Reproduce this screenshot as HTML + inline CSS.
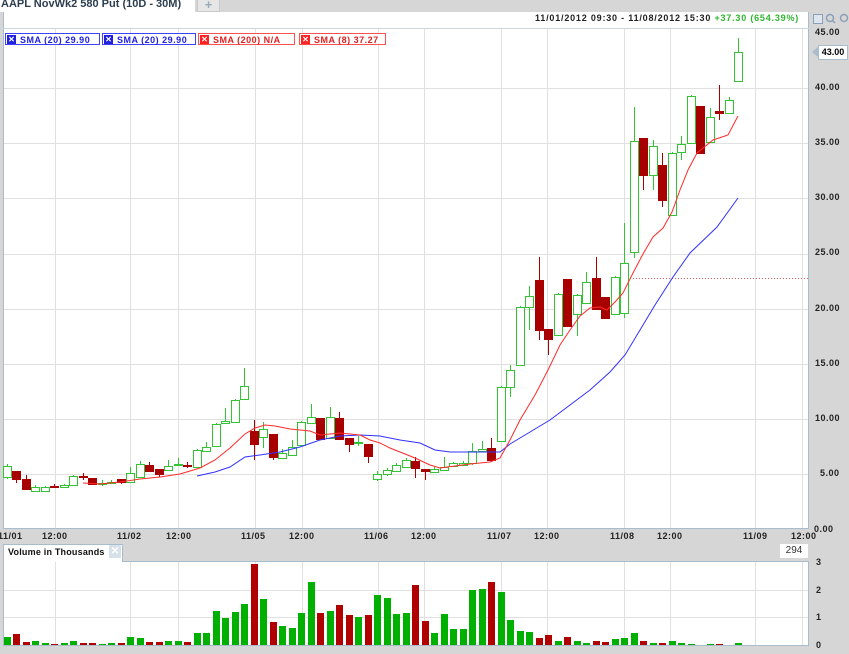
<!DOCTYPE html>
<html><head><meta charset="utf-8">
<style>
html,body{margin:0;padding:0;}
body{width:849px;height:654px;background:#d6d6d6;position:relative;overflow:hidden;font-family:"Liberation Sans",Arial,sans-serif;}
.t{position:absolute;white-space:nowrap;}
.ax{position:absolute;font:bold 9px "Liberation Sans",sans-serif;color:#222;letter-spacing:0.5px;}
.leg{position:absolute;top:33px;height:12px;border:1px solid;background:#fff;font:bold 9px "Liberation Sans",sans-serif;line-height:12px;padding-left:14px;padding-right:3px;box-sizing:border-box;letter-spacing:0.5px;white-space:nowrap;}
.leg i{position:absolute;left:1px;top:1px;width:9px;height:9px;color:#fff;font-style:normal;font-size:8px;line-height:9px;text-align:center;letter-spacing:0;}
</style></head><body>
<div style="position:absolute;left:0;top:0;width:195px;height:12px;background:#fff;"></div>
<div class="t" style="left:1px;top:-2px;font:bold 11px 'Liberation Sans',sans-serif;color:#2c3e50;">AAPL NovWk2 580 Put (10D - 30M)</div>
<div style="position:absolute;left:197px;top:0;width:21px;height:11px;background:#e6e6e6;border:1px solid #c8c8c8;border-top:none;color:#9ab;font:bold 13px sans-serif;line-height:10px;text-align:center;">+</div>
<div style="position:absolute;left:3px;top:12px;width:806px;height:517px;background:#fff;border-left:1px solid #a9bccc;border-right:1px solid #a9bccc;border-bottom:1px solid #a9bccc;box-sizing:border-box;"></div>
<div style="position:absolute;left:3px;top:28px;width:806px;height:1px;background:#c9d6e0;"></div>
<div class="t" style="left:535px;top:13px;font:bold 9px 'Liberation Sans',sans-serif;color:#222;letter-spacing:0.8px;">11/01/2012 09:30 - 11/08/2012 15:30 <span style="color:#2db52d">+37.30 (654.39%)</span></div>
<svg style="position:absolute;left:812px;top:12px" width="37" height="14"><rect x="1.5" y="2.5" width="9" height="9" fill="#dde6ee" stroke="#8aa0b8"/><circle cx="18" cy="6" r="3.5" fill="none" stroke="#8aa0b8" stroke-width="1.5"/><line x1="20.5" y1="8.5" x2="23" y2="11" stroke="#8aa0b8" stroke-width="1.5"/><circle cx="32" cy="6" r="3.5" fill="none" stroke="#8aa0b8" stroke-width="1.5"/></svg>

<svg id="ch" style="position:absolute;left:0;top:0" width="849" height="654"></svg>

<div class="leg" style="left:5px;width:95px;border-color:#4040ff;color:#2020e0;"><i style="background:#2020e0">✕</i>SMA (20) 29.90</div>
<div class="leg" style="left:102px;width:94px;border-color:#4040ff;color:#2020e0;"><i style="background:#2020e0">✕</i>SMA (20) 29.90</div>
<div class="leg" style="left:198px;width:97px;border-color:#ff5050;color:#e02020;"><i style="background:#ff2020">✕</i>SMA (200) N/A</div>
<div class="leg" style="left:299px;width:87px;border-color:#ff5050;color:#e02020;"><i style="background:#ff2020">✕</i>SMA (8) 37.27</div>

<div class="ax" style="left:815px;top:27px;">45.00</div>
<div style="position:absolute;left:818px;top:45px;width:30px;height:15px;background:#fff;border:1px solid #a9bccc;box-sizing:border-box;font:bold 9px 'Liberation Sans',sans-serif;line-height:13px;text-align:center;">43.00</div>
<div style="position:absolute;left:812px;top:47px;width:0;height:0;border-top:5px solid transparent;border-bottom:5px solid transparent;border-right:6px solid #a9bccc;"></div>
<div class="ax" style="left:815px;top:82px;">40.00</div>
<div class="ax" style="left:815px;top:137px;">35.00</div>
<div class="ax" style="left:815px;top:192px;">30.00</div>
<div class="ax" style="left:815px;top:247px;">25.00</div>
<div class="ax" style="left:815px;top:303px;">20.00</div>
<div class="ax" style="left:815px;top:358px;">15.00</div>
<div class="ax" style="left:815px;top:413px;">10.00</div>
<div class="ax" style="left:820px;top:468px;">5.00</div>
<div class="ax" style="left:814px;top:524px;">0.00</div>

<div class="ax" style="left:-2px;top:531px;">11/01</div>
<div class="ax" style="left:42px;top:531px;">12:00</div>
<div class="ax" style="left:117px;top:531px;">11/02</div>
<div class="ax" style="left:166px;top:531px;">12:00</div>
<div class="ax" style="left:241px;top:531px;">11/05</div>
<div class="ax" style="left:289px;top:531px;">12:00</div>
<div class="ax" style="left:364px;top:531px;">11/06</div>
<div class="ax" style="left:411px;top:531px;">12:00</div>
<div class="ax" style="left:487px;top:531px;">11/07</div>
<div class="ax" style="left:534px;top:531px;">12:00</div>
<div class="ax" style="left:610px;top:531px;">11/08</div>
<div class="ax" style="left:657px;top:531px;">12:00</div>
<div class="ax" style="left:743px;top:531px;">11/09</div>
<div class="ax" style="left:791px;top:531px;">12:00</div>

<div style="position:absolute;left:3px;top:544px;width:120px;height:18px;background:#fff;border:1px solid #a9bccc;border-bottom:none;box-sizing:border-box;"></div>
<div class="t" style="left:8px;top:547px;font:bold 9px 'Liberation Sans',sans-serif;color:#111;letter-spacing:0.2px;">Volume in Thousands</div>
<div style="position:absolute;left:109px;top:545px;width:12px;height:13px;background:#d7e1ea;color:#fff;font:bold 10px sans-serif;line-height:13px;text-align:center;">✕</div>
<div style="position:absolute;left:780px;top:544px;width:28px;height:14px;background:#fff;font:10px 'Liberation Sans',sans-serif;color:#333;line-height:14px;text-align:center;">294</div>
<div class="ax" style="left:816px;top:557px;">3</div>
<div class="ax" style="left:816px;top:585px;">2</div>
<div class="ax" style="left:816px;top:612px;">1</div>
<div class="ax" style="left:816px;top:640px;">0</div>

<script>
var s=document.getElementById('ch'),h='';
h+='<rect x="3.5" y="561.5" width="805" height="84" fill="#fff" stroke="#a9bccc"/>';
var vx=[55,130,178,255,302,378,424,501,547,624,670,755,802];
vx.forEach(function(x){h+='<line x1="'+x+'.5" y1="29" x2="'+x+'.5" y2="528" stroke="#e0e0e0"/>';h+='<line x1="'+x+'.5" y1="562" x2="'+x+'.5" y2="645" stroke="#e0e0e0"/>';});
for(var k=1;k<=8;k++){var y=Math.round(529-55.1*k)+.5;h+='<line x1="4" y1="'+y+'" x2="808" y2="'+y+'" stroke="#e0e0e0"/>';}
[617.5,590.5].forEach(function(y){h+='<line x1="4" y1="'+y+'" x2="808" y2="'+y+'" stroke="#e0e0e0"/>';});
h+='<line x1="627" y1="278.5" x2="809" y2="278.5" stroke="#e06060" stroke-dasharray="1,2"/>';
var c=[[466,477,464,479,1],[471,479,471,483,0],[479,489,475,489,0],[487,491,485,492,1],[487,491,486,492,1],[486,487,484,488,0],[485,487,484,488,1],[476,485,475,486,1],[476,477,473,480,0],[478,484,478,485,0],[483,483,480,486,1],[482,482,480,484,1],[479,482,479,484,0],[473,482,467,483,1],[464,477,461,478,1],[465,471,462,472,0],[469,474,469,477,0],[466,470,460,471,1],[464,464,458,466,1],[465,465,462,468,0],[450,467,449,468,1],[447,451,442,452,1],[424,446,423,447,1],[421,423,408,424,1],[400,422,399,423,1],[386,399,368,400,1],[431,444,420,460,0],[429,437,422,448,1],[434,457,434,460,0],[453,458,449,459,1],[447,455,440,456,1],[422,445,421,446,1],[417,423,404,424,1],[418,439,418,440,0],[417,438,407,439,1],[418,439,412,440,0],[438,444,438,452,0],[442,443,436,446,1],[444,456,444,463,0],[474,479,471,481,1],[470,474,468,476,1],[465,471,463,472,1],[460,467,458,468,1],[461,468,457,478,0],[469,471,469,480,0],[469,472,467,473,1],[467,470,457,471,1],[463,466,462,467,1],[463,465,461,466,1],[451,463,443,465,1],[449,451,441,452,1],[448,460,438,462,0],[387,441,386,442,1],[370,387,365,397,1],[307,365,306,366,1],[296,307,286,330,1],[280,330,257,340,0],[329,339,329,355,0],[294,335,293,336,1],[279,326,279,327,0],[295,314,294,336,1],[282,303,272,304,1],[278,309,257,310,0],[297,318,297,319,0],[277,314,276,315,1],[263,313,223,318,1],[141,252,107,258,1],[138,175,138,190,0],[146,175,140,190,1],[165,200,153,207,0],[153,215,152,216,1],[144,152,136,160,1],[96,143,95,144,1],[106,153,106,154,0],[117,142,108,143,1],[111,113,85,120,0],[100,113,97,114,1],[52,81,38,82,1]];
c.forEach(function(d,i){var x=Math.round(6.7+i*9.5);var col=d[4]?'#33c433':'#a80000';
h+='<line x1="'+(x+.5)+'" y1="'+d[2]+'" x2="'+(x+.5)+'" y2="'+d[3]+'" stroke="'+col+'"/>';
var ht=Math.max(d[1]-d[0],1);
if(d[4])h+='<rect x="'+(x-3.5)+'" y="'+(d[0]+.5)+'" width="8" height="'+ht+'" fill="#fff" stroke="#33c433"/>';
else h+='<rect x="'+(x-4)+'" y="'+d[0]+'" width="9" height="'+(ht+1)+'" fill="#a80000"/>';});
var red=[[83,483],[100,484],[120,482],[140,479],[160,477],[180,474],[200,468],[215,460],[230,448],[245,434],[255,428],[265,425],[275,426],[290,429],[300,430],[310,431],[320,435],[330,434],[340,433],[350,434],[360,435],[370,440],[380,443],[390,448],[400,452],[415,458],[430,465],[440,468],[455,466],[470,464],[490,462],[500,458],[510,440],[520,420],[535,395],[548,370],[560,345],[570,330],[580,316],[590,308],[600,307],[607,310],[615,302],[623,293],[633,273],[643,254],[653,237],[663,228],[672,212],[680,190],[688,170],[697,153],[713,140],[728,135],[738,116]];
var blue=[[197,476],[215,472],[230,467],[245,457],[260,455],[280,452],[300,447],[320,440],[340,436],[360,435],[380,436],[400,440],[420,443],[435,450],[450,452],[470,452],[490,452],[500,452],[510,444],[530,432],[550,420],[570,405],[590,390],[610,372],[625,355],[640,330],[655,305],[673,277],[690,253],[717,227],[738,198]];
function pl(p,c){return '<polyline fill="none" stroke="'+c+'" stroke-width="1" points="'+p.map(function(a){return a.join(',')}).join(' ')+'"/>';}
h+=pl(blue,'#3030ff')+pl(red,'#ff2a2a');
var v=[[637,1],[634,0],[642,0],[641,1],[643,1],[644,0],[643,1],[641,1],[643,0],[643,0],[644,1],[643,1],[643,0],[637,1],[638,1],[642,0],[642,0],[641,1],[641,1],[642,0],[633,1],[633,1],[611,1],[618,1],[612,1],[604,1],[564,0],[599,1],[622,0],[626,1],[628,1],[613,1],[582,1],[613,0],[611,1],[605,0],[615,0],[617,1],[615,0],[595,1],[598,1],[614,1],[613,1],[585,0],[621,0],[633,1],[614,1],[629,1],[629,1],[590,1],[589,1],[582,0],[592,1],[620,1],[631,1],[632,1],[638,0],[635,0],[641,1],[637,0],[641,1],[643,1],[641,0],[642,0],[639,1],[638,1],[633,1],[641,0],[643,1],[643,0],[641,1],[643,1],[644,1],[645,1],[644,1],[644,0],[645,1],[643,1]];
v.forEach(function(d,i){var x=Math.round(6.7+i*9.5);if(d[0]<645)h+='<rect x="'+(x-3)+'" y="'+d[0]+'" width="7" height="'+(645-d[0])+'" fill="'+(d[1]?'#00b000':'#b00000')+'"/>';});
s.innerHTML=h;
</script>
</body></html>
